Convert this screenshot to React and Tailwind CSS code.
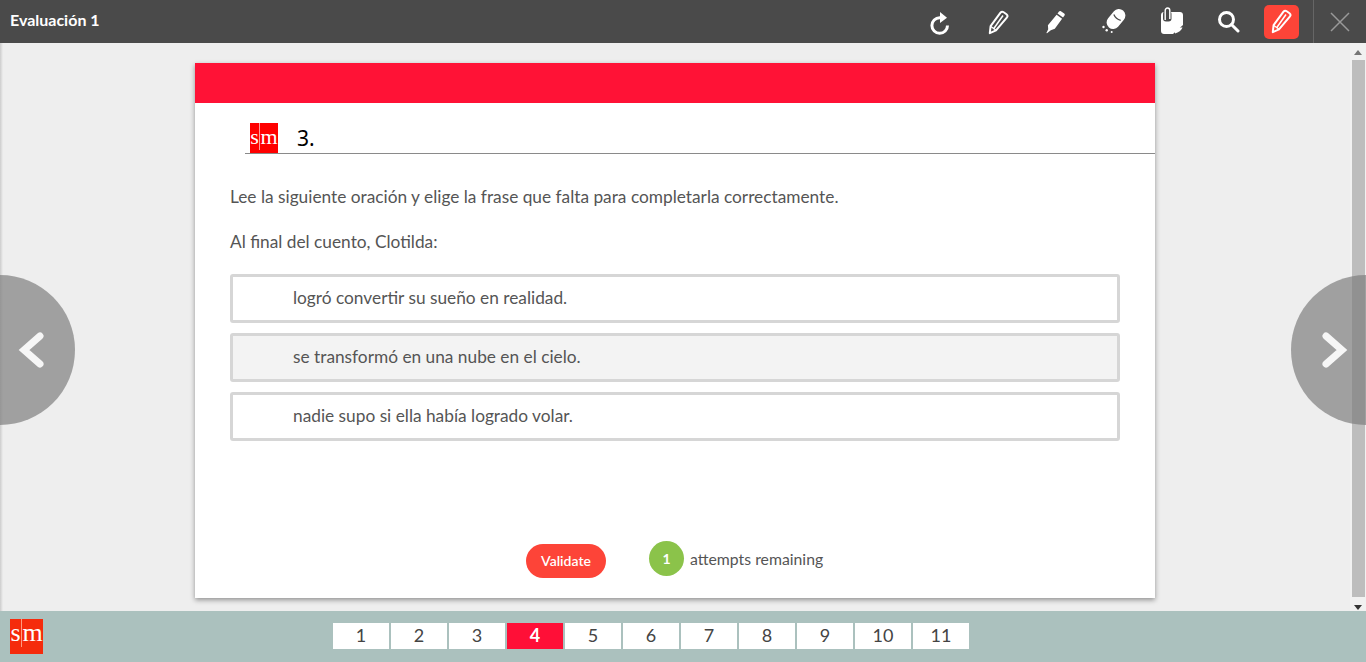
const font = "font-['Lato','Noto_Sans',sans-serif]"

const Reload = ({ className }) => (
  <svg viewBox="0 0 20 24" className={className} fill="none" stroke="currentColor">
    <path d="M17.500 14.500a7.800 7.800 0 1 1-7.800-7.800h1" strokeWidth="3" />
    <path d="M10 1l7 5.700-7 5.300z" fill="currentColor" stroke="none" />
  </svg>
)

const PencilOutline = ({ className }) => (
  <svg viewBox="0 0 21 25" className={className} fill="none" stroke="currentColor" strokeWidth="2" strokeLinejoin="round">
    <path d="M1.800 23.200l.8-7L12.500 2.700c.8-1 2.200-1.200 3.200-.5l2.800 2c1 .8 1.200 2.100.5 3.100L8 20.300z" />
    <path d="M5.500 19L15 5.500" strokeWidth="1.500" />
    <path d="M2.800 16.500l5 3.500" strokeWidth="1.500" />
  </svg>
)

const Marker = ({ className }) => (
  <svg viewBox="0 0 20 24" className={className} fill="currentColor">
    <path d="M13 1.500c.5-.7 1.200-.8 1.900-.3l3.300 2.400c.7.500.8 1.200.3 1.900l-1.500 2-5.500-4z" />
    <path d="M10.600 4.800l5.500 4-7.300 10-4 1.400L1 23.300l-.6-.4 1.800-3.700-.3-3.900z" />
  </svg>
)

const Eraser = ({ className }) => (
  <svg viewBox="0 0 24 24" className={className} fill="currentColor">
    <g transform="rotate(40 14 10)">
      <rect x="7.500" y="-1" width="13" height="22" rx="6.500" />
      <path d="M9.500 8c2.500 1.300 6.500 1.300 9 0" fill="none" stroke="#4a4a4a" strokeWidth="1.300" />
    </g>
    <circle cx="1.500" cy="18" r="1.200" />
    <circle cx="4.700" cy="21.300" r="1.200" />
    <circle cx="9.700" cy="23" r="1" />
  </svg>
)

const Note = ({ className }) => (
  <svg viewBox="0 0 22 27" className={className} fill="currentColor">
    <path d="M0 8c0-1.700 1.300-3 3-3h16c1.700 0 3 1.300 3 3v10L12 27H3c-1.700 0-3-1.300-3-3z" />
    <path d="M14 26.500v-3.800c0-1.300.8-2.200 2.200-2.200h5.300c-1 2.800-4 5.200-7.500 6z" />
    <rect x="2" y="4" width="8.500" height="10.500" rx="3" fill="#4a4a4a" />
    <path d="M4.200 13V3.500c0-3.300 4.600-3.300 4.600 0V12" fill="none" stroke="currentColor" strokeWidth="1.400" />
  </svg>
)

const Lens = ({ className }) => (
  <svg viewBox="0 0 22 22" className={className} fill="none" stroke="currentColor" strokeWidth="3">
    <circle cx="8.500" cy="8.500" r="7" />
    <path d="M13.500 13.500l6.500 6.500" strokeLinecap="round" />
  </svg>
)

const Chevron = ({ className }) => (
  <svg viewBox="0 0 26 38" className={className} fill="none" stroke="currentColor" strokeWidth="7" strokeLinecap="round" strokeLinejoin="miter">
    <path d="M4 5l16 14L4 33" />
  </svg>
)

const Cross = ({ className }) => (
  <svg viewBox="0 0 20 20" className={className} fill="none" stroke="currentColor" strokeWidth="1.500">
    <path d="M1 1l18 18M19 1L1 19" />
  </svg>
)

const tools = [
  { Icon: Reload, size: 'h-[24px] w-[20px]', box: 'w-[58px] pt-[2px]' },
  { Icon: PencilOutline, size: 'h-[25px] w-[21px]', box: 'w-[58px] pt-[1px]' },
  { Icon: Marker, size: 'h-[24px] w-[20px]', box: 'w-[58px] pt-[1px]' },
  { Icon: Eraser, size: 'h-[24px] w-[24px]', box: 'w-[58px] pb-[1px]' },
  { Icon: Note, size: 'h-[27px] w-[22px]', box: 'w-[58px] pb-[2px]' },
  { Icon: Lens, size: 'h-[22px] w-[22px]', box: 'w-[56px]' },
]

const options = [
  { text: 'logró convertir su sueño en realidad.', bg: 'bg-white' },
  { text: 'se transformó en una nube en el cielo.', bg: 'bg-[#f3f3f3]' },
  { text: 'nadie supo si ella había logrado volar.', bg: 'bg-white' },
]

const pages = [1, 2, 3, 4, 5, 6, 7, 8, 9, 10, 11]

const SmLogo = ({ box, col, text, divider }) => (
  <div className={`flex shrink-0 font-['Liberation_Serif',serif] leading-none text-white ${box} ${text}`}>
    <span className={`flex h-full shrink-0 items-center justify-center border-r ${col} ${divider}`}>s</span>
    <span className="flex h-full flex-1 items-center justify-center">m</span>
  </div>
)

export default function App() {
  return (
    <div className={`flex h-[662px] w-[1366px] flex-col overflow-hidden bg-[#eeeeee] ${font}`}>
      {/* Top bar */}
      <header className="flex h-[43px] shrink-0 items-center bg-[#4a4a4a] pl-[10px]">
        <span className="flex-1 pb-[3px] text-[16px] font-bold text-white">Evaluación 1</span>
        <div className="flex h-full items-center text-white">
          {tools.map(({ Icon, size, box }, i) => (
            <div key={i} className={`flex items-center justify-center ${box}`}>
              <Icon className={size} />
            </div>
          ))}
          <div className="mr-[14px] ml-[7px] flex h-[34px] w-[35px] items-center justify-center rounded-[5px] bg-[#fd4438]">
            <PencilOutline className="h-[25px] w-[21px]" />
          </div>
          <div className="flex h-full w-[53px] items-center justify-center border-l border-[#666666]">
            <Cross className="h-[20px] w-[20px] text-[#999999]" />
          </div>
        </div>
      </header>

      {/* Middle */}
      <div className="relative flex min-h-0 flex-1">
        <div className="w-[3px] shrink-0 bg-gradient-to-r from-[#cccccc] to-[#eeeeee]" />
        <main className="flex flex-1 justify-center pt-[20px] pr-[3px]">
          <section className="flex h-[535px] w-[960px] flex-col bg-white shadow-[0_2px_5px_rgba(0,0,0,0.4)]">
            <div className="h-[40px] shrink-0 bg-[#ff1236]" />
            <div className="mt-[20px] ml-[50px] flex h-[31px] shrink-0 items-end border-b border-[#8a8a8a] pl-[5px]">
              <SmLogo box="h-[30px] w-[28px] bg-[#ff0000] pb-[3px]" col="w-[10px]" text="text-[22px]" divider="border-[#ff9a9a]" />
              <span className="ml-[19px] font-['Noto_Sans',sans-serif] text-[21px] leading-[30px] text-black">3.</span>
            </div>
            <div className="px-[35px] pt-[32px] text-[17.3px] leading-[22px] text-[#555555]">
              <p>Lee la siguiente oración y elige la frase que falta para completarla correctamente.</p>
              <p className="mt-[23px]">Al final del cuento, Clotilda:</p>
              <ul className="mt-[21px] flex flex-col gap-[10px]">
                {options.map((o) => (
                  <li key={o.text} className={`flex h-[49px] items-center rounded-[3px] border-[3px] border-[#d6d6d6] pb-[2px] pl-[60px] ${o.bg}`}>
                    {o.text}
                  </li>
                ))}
              </ul>
            </div>
            <div className="mt-auto flex items-center pb-[18px] pl-[331px]">
              <button className="h-[34px] w-[80px] rounded-full bg-[#fd4438] text-[14px] font-semibold text-white">Validate</button>
              <span className="mb-[4px] ml-[43px] flex h-[35px] w-[35px] items-center justify-center rounded-full bg-[#8bc34a] text-[14px] font-bold text-white">1</span>
              <span className="mb-[4px] ml-[6px] text-[15.8px] text-[#555555]">attempts remaining</span>
            </div>
          </section>
        </main>

        {/* Scrollbar */}
        <div className="flex w-[16px] shrink-0 flex-col items-center bg-[#f1f1f1]">
          <div className="mt-[7px] h-0 w-0 border-x-[4px] border-b-[5px] border-x-transparent border-b-[#777777]" />
          <div className="mt-[5px] h-[537px] w-[13px] bg-[#bdbdbd]" />
          <div className="mt-auto mb-[1px] h-0 w-0 border-x-[4px] border-t-[5px] border-x-transparent border-t-[#333333]" />
        </div>

        {/* Side arrows */}
        <button className="absolute top-[232px] left-[-75px] flex h-[150px] w-[150px] items-center justify-end rounded-full bg-[#7f7f7f]/70 pr-[31px]">
          <Chevron className="h-[38px] w-[26px] rotate-180 text-white/90" />
        </button>
        <button className="absolute top-[232px] right-[-75px] flex h-[150px] w-[150px] items-center justify-start rounded-full bg-[#7f7f7f]/70 pl-[31px]">
          <Chevron className="h-[38px] w-[26px] text-white/90" />
        </button>
      </div>

      {/* Footer */}
      <footer className="relative flex h-[51px] shrink-0 items-center justify-center bg-[#abc1be] pr-[64px] pb-[2px]">
        <div className="absolute top-[8px] left-[10px]">
          <SmLogo box="h-[35px] w-[33px] bg-[#f52b0c] pb-[7px]" col="w-[12px]" text="text-[26px]" divider="border-[#ff9a80]" />
        </div>
        <nav className="flex gap-[2px]">
          {pages.map((p) => (
            <span
              key={p}
              className={`flex h-[26px] w-[56px] items-center justify-center text-[18px] ${p === 4 ? 'bg-[#ff0f37] font-bold text-white' : 'bg-white text-[#444444]'}`}
            >
              {p}
            </span>
          ))}
        </nav>
      </footer>
    </div>
  )
}
